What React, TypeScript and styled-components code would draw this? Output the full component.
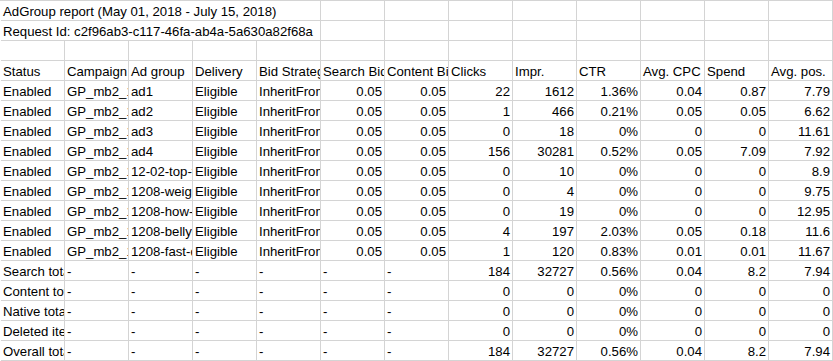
import React from "react";
import styled, {createGlobalStyle} from "styled-components";

const GlobalStyle = createGlobalStyle`
  body {
    margin: 0;
    background: #ffffff;
  }
`

const COL_COUNT = 13

const Sheet = styled.div`
  display: grid;
  grid-template-columns: repeat(${COL_COUNT}, 64px);
  grid-auto-rows: 20px;
  width: 833px;
  box-sizing: border-box;
  padding-left: 1px;
  border-top: 1px solid #d4d4d4;
  background: #ffffff;
  font-family: "Liberation Sans", Arial, sans-serif;
  font-size: 13.2px;
  color: #000000;
`

const Cell = styled.div<{ $align?: 'left' | 'right', $span?: number }>`
  // sizing
  box-sizing: border-box;
  height: 20px;
  padding: 1px 2px 0 2px;
  ${props => props.$span ? `grid-column: span ${props.$span};` : ''}

  // grid lines
  border-right: 1px solid #d4d4d4;
  border-bottom: 1px solid #d4d4d4;

  // text
  line-height: 19px;
  white-space: nowrap;
  overflow: hidden;
  text-align: ${props => props.$align === 'right' ? 'right' : 'left'};
`

type Row = (string | number)[]

const header = ['Status', 'Campaign', 'Ad group', 'Delivery', 'Bid Strategy', 'Search Bid', 'Content Bid',
  'Clicks', 'Impr.', 'CTR', 'Avg. CPC', 'Spend', 'Avg. pos.']

const adGroups: [string, number, number, string, number, number, number][] = [
  ['ad1', 22, 1612, '1.36%', 0.04, 0.87, 7.79],
  ['ad2', 1, 466, '0.21%', 0.05, 0.05, 6.62],
  ['ad3', 0, 18, '0%', 0, 0, 11.61],
  ['ad4', 156, 30281, '0.52%', 0.05, 7.09, 7.92],
  ['12-02-top-foods', 0, 10, '0%', 0, 0, 8.9],
  ['1208-weight-loss', 0, 4, '0%', 0, 0, 9.75],
  ['1208-how-to', 0, 19, '0%', 0, 0, 12.95],
  ['1208-belly-fat', 4, 197, '2.03%', 0.05, 0.18, 11.6],
  ['1208-fast-diet', 1, 120, '0.83%', 0.01, 0.01, 11.67],
]

const rows: Row[] = adGroups.map(([name, ...stats]) => [
  'Enabled', 'GP_mb2_1208', name, 'Eligible', 'InheritFromParent', 0.05, 0.05, ...stats,
])

const totals: Row[] = [
  ['Search total', '-', '-', '-', '-', '-', '-', 184, 32727, '0.56%', 0.04, 8.2, 7.94],
  ['Content total', '-', '-', '-', '-', '-', '-', 0, 0, '0%', 0, 0, 0],
  ['Native total', '-', '-', '-', '-', '-', '-', 0, 0, '0%', 0, 0, 0],
  ['Deleted items', '-', '-', '-', '-', '-', '-', 0, 0, '0%', 0, 0, 0],
  ['Overall total', '-', '-', '-', '-', '-', '-', 184, 32727, '0.56%', 0.04, 8.2, 7.94],
]

// numbers and percentages sit on the right, like a spreadsheet does it
const isNumeric = (value: string | number) =>
  typeof value === 'number' || /^[\d.]+%$/.test(value)

const TitleRow: React.FC<{ text: string }> = ({text}) => (
  <>
    <Cell $span={5}>{text}</Cell>
    {Array.from({length: COL_COUNT - 5}).map((_, i) => <Cell key={i}/>)}
  </>
)

const App: React.FC = () => {
  return (
    <>
      <GlobalStyle/>
      <Sheet>
        <TitleRow text={'AdGroup report (May 01, 2018 - July 15, 2018)'}/>
        <TitleRow text={'Request Id: c2f96ab3-c117-46fa-ab4a-5a630a82f68a'}/>
        {Array.from({length: COL_COUNT}).map((_, i) => <Cell key={`blank-${i}`}/>)}
        {header.map(title => <Cell key={title}>{title}</Cell>)}
        {[...rows, ...totals].map((row, r) =>
          row.map((value, c) => (
            <Cell key={`${r}-${c}`} $align={isNumeric(value) ? 'right' : 'left'}>
              {value}
            </Cell>
          ))
        )}
      </Sheet>
    </>
  )
}

export default App
